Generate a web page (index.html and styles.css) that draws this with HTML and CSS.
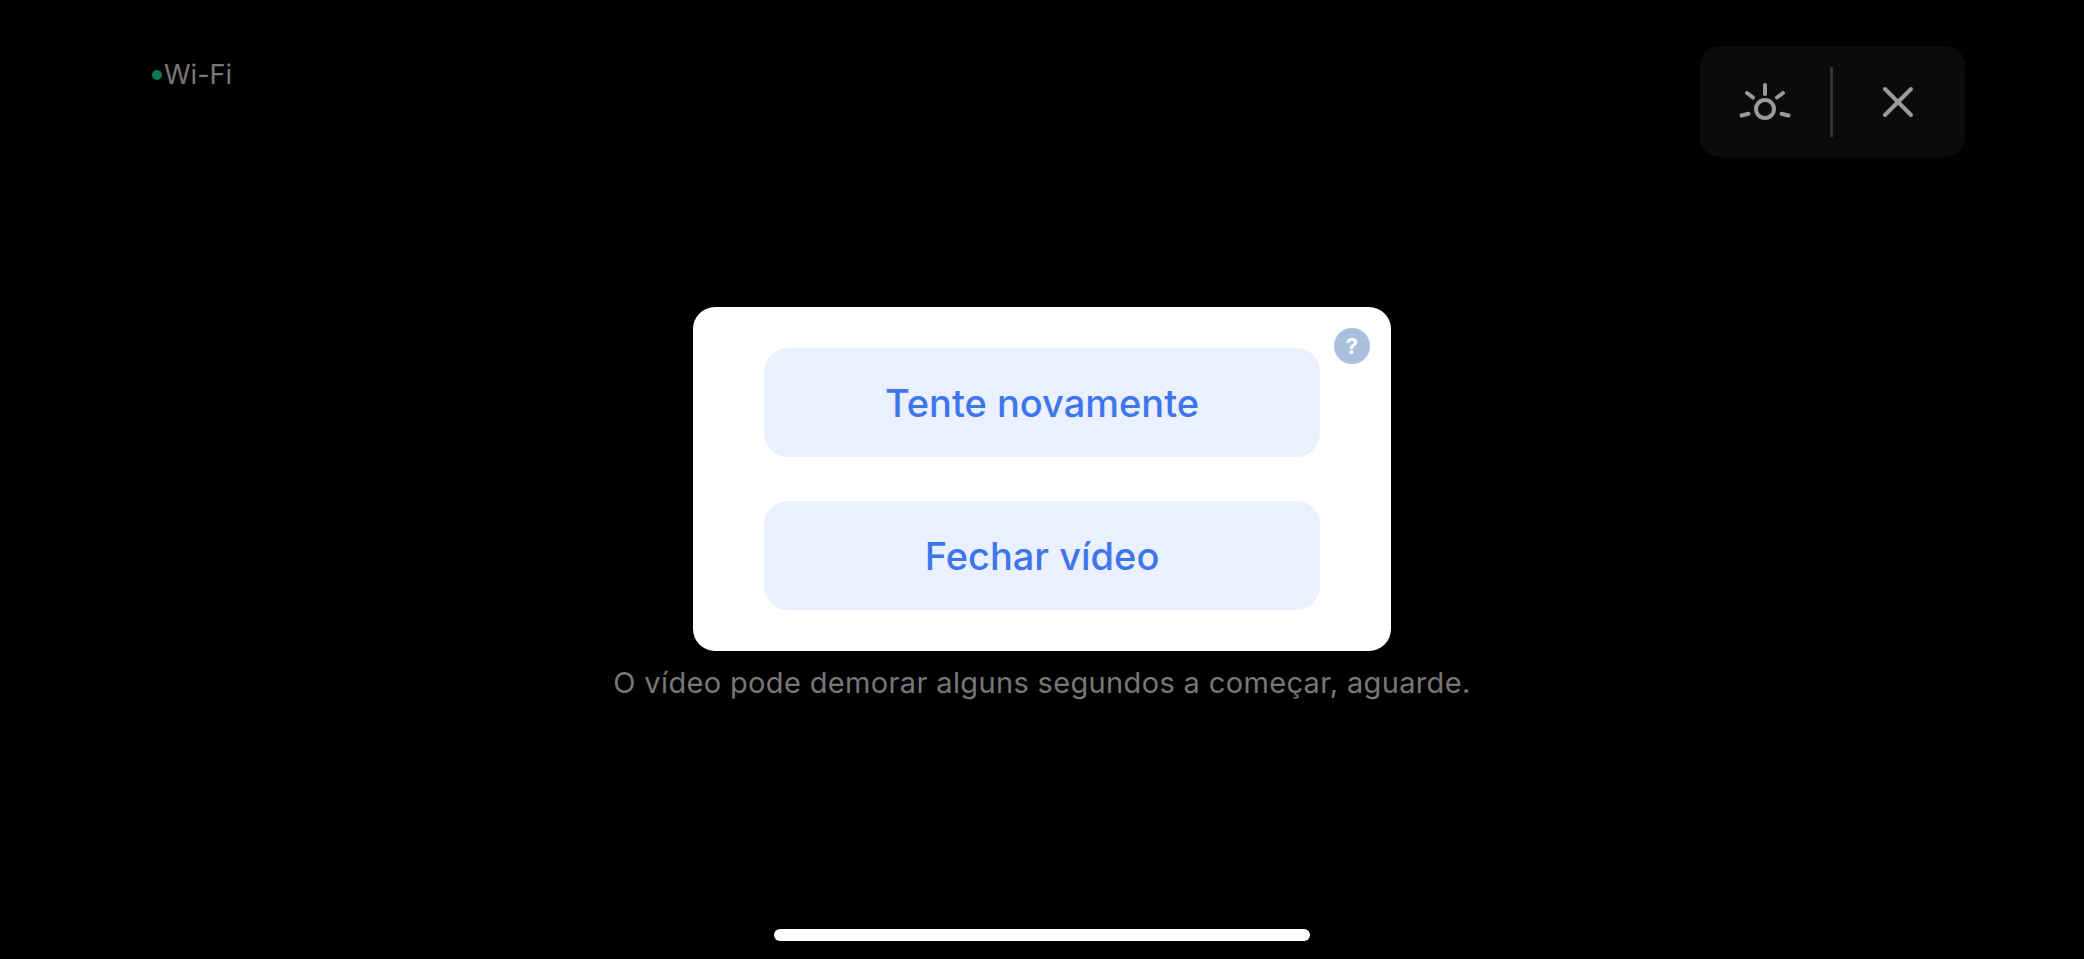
FILE: index.html
```html
<!DOCTYPE html>
<html lang="pt">
<head>
    <meta charset="UTF-8">
    <meta name="viewport" content="width=device-width, initial-scale=1.0">
    <title>Vídeo</title>
    <link rel="stylesheet" href="styles.css">
</head>
<body>
    <!-- Top Bar -->
    <header class="top-bar">
        <div class="network">
            <span class="network-dot"></span>
            <span>Wi-Fi</span>
        </div>
        <div class="controls">
            <button class="control-button" aria-label="Brilho">
                <svg width="54" height="44" viewBox="0 0 54 44" fill="none" stroke="#9a9a9a" stroke-width="4" stroke-linecap="round">
                    <circle cx="27" cy="29" r="9"/>
                    <path d="M27 5v9"/>
                    <path d="M9 13l6 4.5"/>
                    <path d="M45 13l-6 4.5"/>
                    <path d="M3.5 35.5l7-1.8"/>
                    <path d="M50.500 35.500l-7-1.800"/>
                </svg>
            </button>
            <span class="control-divider"></span>
            <button class="control-button control-button-close" aria-label="Fechar">
                <svg width="34" height="34" viewBox="0 0 34 34" fill="none" stroke="#9a9a9a" stroke-width="4" stroke-linecap="round">
                    <path d="M4 4l26 26"/>
                    <path d="M30 4L4 30"/>
                </svg>
            </button>
        </div>
    </header>

    <!-- Dialog -->
    <main class="stage">
        <div class="dialog">
            <button class="dialog-button">Tente novamente</button>
            <button class="dialog-button">Fechar vídeo</button>
            <span class="help-badge">?</span>
        </div>
        <p class="message">O vídeo pode demorar alguns segundos a começar, aguarde.</p>
    </main>

    <div class="home-bar"></div>
</body>
</html>
```

FILE: styles.css
```css
body {
    margin: 0;
    height: 959px;
    overflow: hidden;
    background: #000;
    font-family: Inter, "Liberation Sans", sans-serif;
    display: flex;
    flex-direction: column;
    align-items: center;
}

/* Top Bar */
.top-bar {
    box-sizing: border-box;
    width: 100%;
    padding: 46px 119px 0 152px;
    display: flex;
    justify-content: space-between;
    align-items: flex-start;
}

.network {
    margin-top: 12px;
    display: flex;
    align-items: center;
    gap: 2px;
    color: #777;
    font-size: 27px;
    line-height: 34px;
}

.network-dot {
    width: 10px;
    height: 10px;
    border-radius: 50%;
    background: #0f7a50;
}

.controls {
    width: 265px;
    height: 111px;
    background: #0b0b0b;
    border-radius: 20px;
    display: flex;
    align-items: center;
}

.control-button {
    flex: 1;
    height: 100%;
    padding: 0;
    border: none;
    background: none;
    display: flex;
    align-items: center;
    justify-content: center;
}

.control-button-close {
    padding-right: 2px;
}

.control-divider {
    width: 3px;
    height: 70px;
    background: #333;
}

/* Dialog */
.stage {
    margin-top: 150px;
    display: flex;
    flex-direction: column;
    align-items: center;
}

.dialog {
    position: relative;
    box-sizing: border-box;
    width: 698px;
    height: 344px;
    padding: 41px 71px;
    background: #fff;
    border-radius: 22px;
    display: flex;
    flex-direction: column;
    gap: 44px;
}

.dialog-button {
    height: 109px;
    padding: 1px 0 0;
    border: none;
    border-radius: 24px;
    background: #eaf0fd;
    color: #3d76ec;
    font-family: inherit;
    font-size: 38px;
    font-weight: 500;
}

.help-badge {
    position: absolute;
    top: 21px;
    right: 21px;
    width: 36px;
    height: 36px;
    border-radius: 50%;
    background: #aac0de;
    color: #fff;
    font-size: 22px;
    font-weight: 700;
    line-height: 36px;
    text-align: center;
}

.message {
    margin: 14px 0 0;
    color: #777;
    font-size: 29px;
    letter-spacing: 0.35px;
    line-height: 36px;
    white-space: nowrap;
}

.home-bar {
    margin-top: auto;
    margin-bottom: 18px;
    width: 536px;
    height: 12px;
    border-radius: 6px;
    background: #fff;
}
```
